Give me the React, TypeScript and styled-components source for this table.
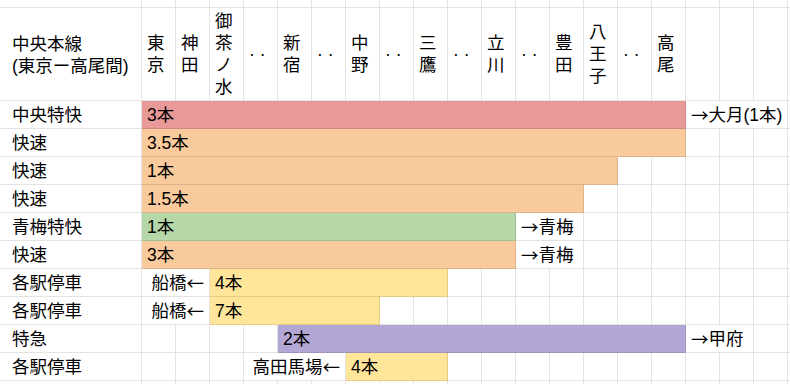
import React from 'react';
import styled, { createGlobalStyle } from 'styled-components';

const GlobalStyle = createGlobalStyle`
   html, body {
      margin: 0;
      padding: 0;
      background: #fff;
      overflow: hidden;
   }
   body {
      font-family: 'Liberation Sans', Arial, 'Noto Sans CJK JP', sans-serif;
      font-size: 17.5px;
      color: #000;
   }
`;

const COLS = 20;

const Sheet = styled.div`
   display: grid;
   grid-template-columns: 6px 136px repeat(${COLS}, 34px);
   grid-template-rows: 8px 93px repeat(10, 28px) 28px;
   width: 790px;
   height: 384px;
   overflow: hidden;
`;

const Cell = styled.div<{ $span?: number; $fill?: string; $align?: 'left' | 'right' }>`
   grid-column: span ${(p) => p.$span || 1};
   box-sizing: border-box;
   border-right: 1px solid rgba(0, 0, 0, 0.11);
   border-bottom: 1px solid rgba(0, 0, 0, 0.11);
   background: ${(p) => p.$fill || '#fff'};
   display: flex;
   align-items: center;
   justify-content: ${(p) => (p.$align === 'right' ? 'flex-end' : 'flex-start')};
   padding: 1px 5px 0 5px;
   white-space: nowrap;
   line-height: 22px;
   min-width: 0;
`;

const HeadCell = styled(Cell)`
   padding: 0 5px;
`;

const Stacked = styled.div`
   display: flex;
   flex-direction: column;
   line-height: 22px;
`;

const LabelCell = styled(Cell)`
   padding-left: 6px;
`;

// arrows come from the CJK font in the original (full width, thin)
const Arrow = styled.span`
   font-family: 'Noto Sans CJK JP', sans-serif;
`;

const RED = '#ea9999';
const ORANGE = '#f9cb9c';
const GREEN = '#b6d7a8';
const YELLOW = '#ffe599';
const PURPLE = '#b4a7d6';

const stations = [
   '東京', '神田', '御茶ノ水', '· ·', '新宿', '· ·', '中野', '· ·',
   '三鷹', '· ·', '立川', '· ·', '豊田', '八王子', '· ·', '高尾',
];

interface Seg {
   span?: number;
   fill?: string;
   text?: string;
   align?: 'left' | 'right';
}

const rows: { label: string; segs: Seg[] }[] = [
   { label: '中央特快', segs: [{ span: 16, fill: RED, text: '3本' }, { span: 3, text: '→大月(1本)' }] },
   { label: '快速', segs: [{ span: 16, fill: ORANGE, text: '3.5本' }] },
   { label: '快速', segs: [{ span: 14, fill: ORANGE, text: '1本' }] },
   { label: '快速', segs: [{ span: 13, fill: ORANGE, text: '1.5本' }] },
   { label: '青梅特快', segs: [{ span: 11, fill: GREEN, text: '1本' }, { span: 2, text: '→青梅' }] },
   { label: '快速', segs: [{ span: 11, fill: ORANGE, text: '3本' }, { span: 2, text: '→青梅' }] },
   { label: '各駅停車', segs: [{ span: 2, text: '船橋←', align: 'right' }, { span: 7, fill: YELLOW, text: '4本' }] },
   { label: '各駅停車', segs: [{ span: 2, text: '船橋←', align: 'right' }, { span: 5, fill: YELLOW, text: '7本' }] },
   { label: '特急', segs: [{}, {}, {}, {}, { span: 12, fill: PURPLE, text: '2本' }, { span: 2, text: '→甲府' }] },
   { label: '各駅停車', segs: [{}, {}, {}, { span: 3, text: '高田馬場←', align: 'right' }, { span: 3, fill: YELLOW, text: '4本' }] },
];

// split arrow glyphs out so they render with the CJK face
const withArrows = (text?: string) =>
   text
      ? text.split(/([←→])/).map((part, i) =>
           part === '←' || part === '→' ? <Arrow key={i}>{part}</Arrow> : part
        )
      : null;

const blanks = (n: number, key: string) =>
   Array.from({ length: n }, (_, i) => <Cell key={`${key}-${i}`} />);

const EdgeRow = ({ id }: { id: string }) => <>{blanks(COLS + 2, id)}</>;

const App: React.FC = () => {
   return (
      <>
         <GlobalStyle />
         <Sheet>
            <EdgeRow id="top" />

            {/* header */}
            <Cell />
            <LabelCell>
               <Stacked>
                  <span>中央本線</span>
                  <span>(東京ー高尾間)</span>
               </Stacked>
            </LabelCell>
            {stations.map((s, i) => (
               <HeadCell key={`st-${i}`}>
                  {s === '· ·' ? (
                     s
                  ) : (
                     <Stacked>
                        {s.split('').map((c, j) => (
                           <span key={j}>{c}</span>
                        ))}
                     </Stacked>
                  )}
               </HeadCell>
            ))}
            {blanks(COLS - stations.length, 'hd')}

            {rows.map((r, ri) => {
               const used = r.segs.reduce((n, s) => n + (s.span || 1), 0);
               return (
                  <React.Fragment key={`row-${ri}`}>
                     <Cell />
                     <LabelCell>{r.label}</LabelCell>
                     {r.segs.map((s, si) => (
                        <Cell key={si} $span={s.span} $fill={s.fill} $align={s.align}>
                           {withArrows(s.text)}
                        </Cell>
                     ))}
                     {blanks(COLS - used, `r${ri}`)}
                  </React.Fragment>
               );
            })}

            <EdgeRow id="bottom" />
         </Sheet>
      </>
   );
};

export default App;
